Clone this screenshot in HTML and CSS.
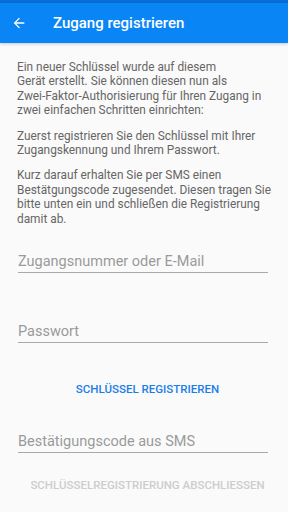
FILE: index.html
```html
<!DOCTYPE html>
<html lang="de">
  <head>
    <meta charset="UTF-8">
    <meta name="viewport" content="width=device-width, initial-scale=1">
    <title>Zugang registrieren</title>
    <link rel="stylesheet" href="styles.css">
  </head>
  <body>
    <div class="status-bar"></div>
    <header class="toolbar">
      <button class="back-button" aria-label="Zurück">
        <svg width="16" height="16" viewBox="0 0 24 24"><path d="M20 11H7.83l5.59-5.59L12 4l-8 8 8 8 1.41-1.41L7.83 13H20v-2z" fill="#fff"/></svg>
      </button>
      <h1 class="toolbar-title">Zugang registrieren</h1>
    </header>
    <main class="content">
      <div class="intro">
        <p>Ein neuer Schlüssel wurde auf diesem<br>Gerät erstellt. Sie können diesen nun als <span class="nowrap">Zwei-Faktor-Authorisierung</span> für Ihren Zugang in zwei einfachen Schritten einrichten:</p>
        <p>Zuerst registrieren Sie den Schlüssel mit Ihrer Zugangskennung und Ihrem Passwort.</p>
        <p>Kurz darauf erhalten Sie per SMS einen Bestätgungscode zugesendet. Diesen tragen Sie bitte unten ein und schließen die Registrierung damit ab.</p>
      </div>
      <input class="field field-user" type="text" placeholder="Zugangsnummer oder E-Mail">
      <input class="field field-password" type="password" placeholder="Passwort">
      <button class="text-button register">Schlüssel registrieren</button>
      <input class="field field-code" type="text" placeholder="Bestätigungscode aus SMS">
      <button class="text-button finish" disabled>Schlüsselregistrierung abschliessen</button>
    </main>
  </body>
</html>
```

FILE: styles.css
```css
body {
  margin: 0;
  padding: 0;
  background: #fafafa;
  font-family: Roboto, "Noto Sans", Arial, sans-serif;
  overflow: hidden;
}

.status-bar {
  height: 3px;
  background: #0670d8;
}

.toolbar {
  height: 40px;
  display: flex;
  align-items: center;
  background: #0a85f6;
  box-shadow: 0 1px 3px rgba(0, 0, 0, 0.2);
}

.back-button {
  width: 38px;
  height: 40px;
  padding: 0 0 0 11px;
  border: none;
  background: none;
  display: flex;
  align-items: center;
}

.toolbar-title {
  margin: 0 0 0 15px;
  color: #fff;
  font-size: 15px;
  font-weight: 500;
}

.content {
  display: flex;
  flex-direction: column;
  align-items: flex-start;
  padding: 17px 10px 0 17px;
}

.intro {
  color: #666;
  font-size: 11.85px;
  line-height: 14.4px;
}

.intro p {
  margin: 0 0 11px;
}

.intro p:last-child {
  margin-bottom: 0;
}

.nowrap {
  white-space: nowrap;
}

.field {
  box-sizing: content-box;
  width: 250px;
  height: 22px;
  margin: 0 0 0 1px;
  padding: 0;
  border: none;
  border-bottom: 1px solid #a8a8a8;
  background: transparent;
  font-family: inherit;
  font-size: 14.5px;
  color: #333;
  outline: none;
}

.field::placeholder {
  color: #9a9a9a;
}

.field-user {
  margin-top: 24px;
}

.field-password {
  margin-top: 47px;
}

.field-code {
  margin-top: 23px;
}

.text-button {
  align-self: center;
  height: 36px;
  padding: 0;
  border: none;
  background: none;
  font-family: inherit;
  font-size: 11.5px;
  font-weight: 500;
  text-transform: uppercase;
}

.register {
  margin-top: 28px;
  color: #1a7ee8;
}

.finish {
  margin-top: 14px;
  color: #cdcdcd;
}
```
